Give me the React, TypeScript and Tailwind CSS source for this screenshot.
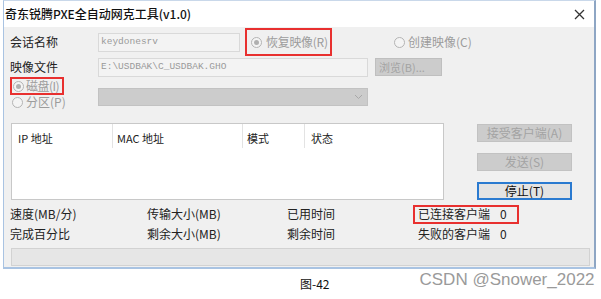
import React from "react";

const font = { fontFamily: '"Noto Sans CJK SC", "Noto Sans", sans-serif' };

function Radio({ checked }: { checked?: boolean }) {
  return (
    <span className="w-[11px] h-[11px] rounded-full border border-[#b4b4b4] bg-[#f4f4f4] flex items-center justify-center shrink-0">
      {checked && <span className="w-[5px] h-[5px] rounded-full bg-[#b0b0b0]" />}
    </span>
  );
}

export default function App() {
  return (
    <div className="w-[601px] h-[299px] bg-white text-[12px] leading-none text-[#222] whitespace-nowrap" style={font}>
      <div className="ml-[3px] w-[593px] h-[269px] border-l border-r-2 border-b-2 border-t border-l-[#a9c3e2] border-r-[#8ea6c4] border-b-[#a9c3e2] border-t-[#c9d8ea] flex flex-col">
        {/* title */}
        <div className="h-[26px] bg-white flex items-center justify-between pl-[1px] pr-[9px] shrink-0">
          <span className="text-[12px] text-[#111] font-medium">奇东锐腾PXE全自动网克工具(v1.0)</span>
          <svg width="11" height="11" viewBox="0 0 11 11">
            <path d="M1 1 L10 10 M10 1 L1 10" stroke="#333" strokeWidth="1.3" />
          </svg>
        </div>
        {/* body */}
        <div className="flex-1 bg-[#f0f0f0] pl-[6px] flex flex-col">
          {/* row 1 */}
          <div className="h-[30px] flex items-center">
            <span className="w-[88px]">会话名称</span>
            <div className="w-[142px] h-[19px] border border-[#d9d9d9] bg-[#f3f3f3] flex items-center pl-[2px] text-[9.5px] text-[#9a9a9a]" style={{ fontFamily: '"Liberation Mono", monospace' }}>
              keydonesrv
            </div>
            <div className="ml-[5px] w-[87px] h-[28px] border-2 border-[#e8302f] flex items-center pl-[4px] gap-[4px] text-[#9c9c9c]">
              <Radio checked />
              <span className="tracking-[-0.3px]">恢复映像(R)</span>
            </div>
            <div className="ml-[62px] flex items-center gap-[3px] text-[#9c9c9c]">
              <Radio />
              <span>创建映像(C)</span>
            </div>
          </div>
          {/* row 2 */}
          <div className="h-[20px] flex items-center">
            <span className="w-[88px]">映像文件</span>
            <div className="w-[270px] h-[19px] border border-[#d9d9d9] bg-[#f3f3f3] flex items-center pl-[2px] text-[9.5px] text-[#9a9a9a]" style={{ fontFamily: '"Liberation Mono", monospace' }}>
              E:\USDBAK\C_USDBAK.GHO
            </div>
            <div className="ml-[7px] w-[67px] h-[18px] bg-[#cccccc] border border-[#bfbfbf] flex items-center pl-[3px] text-[#a3a3a3] text-[11px]">
              浏览(B)...
            </div>
          </div>
          {/* row 3 */}
          <div className="h-[32px] flex items-start">
            <div className="w-[88px] flex flex-col">
              <div className="w-[54px] h-[18px] border-2 border-[#e8302f] flex items-center pl-[1px] gap-[2px] text-[#9c9c9c]">
                <Radio checked />
                <span className="tracking-[-0.5px]">磁盘(I)</span>
              </div>
              <div className="h-[14px] flex items-center pl-[2px] gap-[3px] text-[#9c9c9c]">
                <Radio />
                <span>分区(P)</span>
              </div>
            </div>
            <div className="mt-[11px] w-[270px] h-[18px] bg-[#cccccc] border border-[#c2c2c2] flex items-center justify-end pr-[4px]">
              <svg width="9" height="6" viewBox="0 0 9 6">
                <path d="M1 1 L4.5 4.5 L8 1" stroke="#a8a8a8" strokeWidth="1" fill="none" />
              </svg>
            </div>
          </div>
          {/* list + buttons */}
          <div className="mt-[14px] flex items-start">
            <div className="ml-[1px] w-[433px] h-[77px] bg-white border border-[#c8c8c8]">
              <div className="flex h-[24px] text-[11px] text-[#222]">
                <div className="w-[101px] border-r border-[#e3e3e3] pl-[6px] pt-[9px]">IP 地址</div>
                <div className="w-[130px] border-r border-[#e3e3e3] pl-[4px] pt-[9px]">MAC 地址</div>
                <div className="w-[62px] border-r border-[#e3e3e3] pl-[4px] pt-[9px]">模式</div>
                <div className="pl-[6px] pt-[9px]">状态</div>
              </div>
            </div>
            <div className="ml-[33px] mt-[1px] flex flex-col gap-[11px]">
              <div className="w-[95px] h-[18px] bg-[#cccccc] border border-[#c2c2c2] flex items-center justify-center text-[#a3a3a3]">接受客户端(A)</div>
              <div className="w-[95px] h-[18px] bg-[#cccccc] border border-[#c2c2c2] flex items-center justify-center text-[#a3a3a3]">发送(S)</div>
              <div className="w-[95px] h-[18px] border-2 border-[#2a7ad0] bg-[#e3e3e3] flex items-center justify-center text-[#111]">停止(T)</div>
            </div>
          </div>
          {/* stats */}
          <div className="mt-[4px] h-[20px] flex items-center">
            <span className="w-[137px]">速度(MB/分)</span>
            <span className="w-[140px]">传输大小(MB)</span>
            <span className="w-[126px]">已用时间</span>
            <div className="w-[106px] h-[19px] border-2 border-[#e8302f] flex items-center pl-[3px]">
              <span className="w-[82px]">已连接客户端</span>
              <span>0</span>
            </div>
          </div>
          <div className="h-[20px] flex items-center">
            <span className="w-[137px]">完成百分比</span>
            <span className="w-[140px]">剩余大小(MB)</span>
            <span className="w-[126px]">剩余时间</span>
            <div className="w-[106px] flex items-center pl-[5px]">
              <span className="w-[82px]">失败的客户端</span>
              <span>0</span>
            </div>
          </div>
          <div className="mt-[4px] ml-[1px] w-[579px] h-[18px] bg-[#e6e6e6] border border-[#d2d2d2]" />
        </div>
      </div>
      {/* caption */}
      <div className="h-[30px] flex items-center">
        <span className="ml-[300px] text-[12px] text-[#111]">图-42</span>
        <span className="ml-[90px] text-[17px] text-[#9a9a9a] -mt-[9px]" style={{ fontFamily: '"Liberation Sans", sans-serif' }}>CSDN @Snower_2022</span>
      </div>
    </div>
  );
}
